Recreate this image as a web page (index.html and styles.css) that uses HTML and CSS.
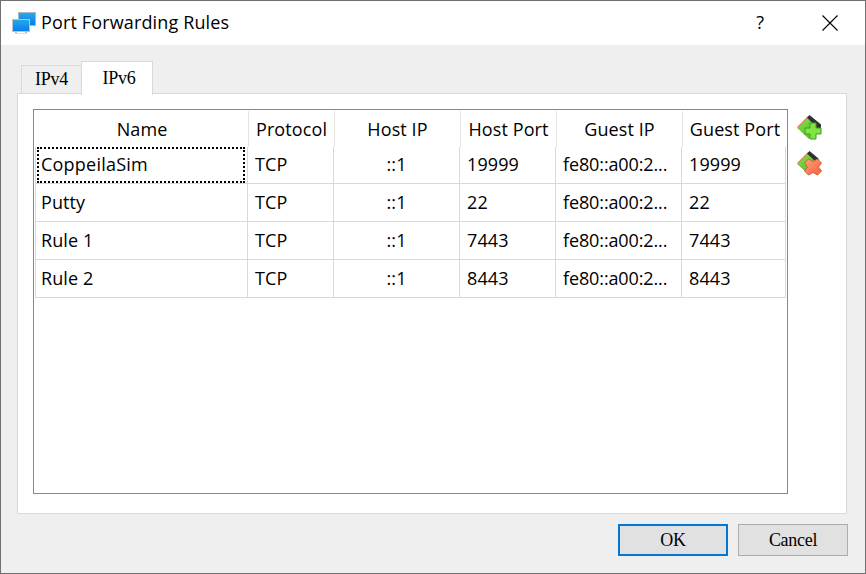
FILE: index.html
```html
<!DOCTYPE html>
<html lang="en">
<head>
<meta charset="utf-8">
<title>Port Forwarding Rules</title>
<link rel="stylesheet" href="styles.css">
</head>
<body>
<div class="window">
  <header class="titlebar">
    <svg class="app-icon" width="24" height="22" viewBox="0 0 24 22">
      <defs><linearGradient id="blue" x1="0" y1="0" x2="0" y2="1"><stop offset="0" stop-color="#25a9e8"/><stop offset="1" stop-color="#087df0"/></linearGradient></defs>
      <path d="M6 0H24V14H6z" fill="#a9b9c4"/><path d="M7 1H23V13H7z" fill="url(#blue)"/>
      <path d="M0 7H18V20H0z" fill="#b9c2ca"/><path d="M1 8H17V19H1z" fill="url(#blue)"/>
      <path d="M3 20H15V21.5H3z" fill="#b9bcc0"/><path d="M5 20H13V21H5z" fill="#fff"/>
    </svg>
    <h1>Port Forwarding Rules</h1>
    <span class="help">?</span>
    <svg class="close" width="16" height="16" viewBox="0 0 16 16"><path d="M.5 .5L15.5 15.5M15.5 .5L.5 15.5" stroke="#000" stroke-width="1.1"/></svg>
  </header>
  <nav class="tabs"><div class="tab">IPv4</div><div class="tab active">IPv6</div></nav>
  <main class="pane">
    <div class="table">
      <div class="head"><span>Name</span><span>Protocol</span><span>Host IP</span><span>Host Port</span><span>Guest IP</span><span>Guest Port</span></div>
      <div class="body">
        <div class="row first"><span class="focus">CoppeilaSim</span><span>TCP</span><span class="center">::1</span><span>19999</span><span class="addr">fe80::a00:2...</span><span>19999</span></div>
        <div class="row"><span>Putty</span><span>TCP</span><span class="center">::1</span><span>22</span><span class="addr">fe80::a00:2...</span><span>22</span></div>
        <div class="row"><span>Rule 1</span><span>TCP</span><span class="center">::1</span><span>7443</span><span class="addr">fe80::a00:2...</span><span>7443</span></div>
        <div class="row"><span>Rule 2</span><span>TCP</span><span class="center">::1</span><span>8443</span><span class="addr">fe80::a00:2...</span><span>8443</span></div>
      </div>
    </div>
    <div class="tools">
      <svg width="26" height="25" viewBox="0 0 26 25">
        <defs><linearGradient id="green" x1="0" y1="0" x2="1" y2="1"><stop offset="0" stop-color="#8be34b"/><stop offset="1" stop-color="#3cb820"/></linearGradient></defs>
        <path d="M.7 13L12 1.8L23.5 12L12 23.5z" fill="url(#green)" stroke="#6bb03c" stroke-width=".8"/>
        <path d="M.5 12.5L11 2" stroke="#e9865d" stroke-width="1.4"/>
        <path d="M10 2.5L12.5 0L24 9.5V13H20z" fill="#303030"/>
        <path d="M13 8H19V13H24V19H19V24H13V19H8V13H13z" fill="#80e442" stroke="#3c9f23"/>
      </svg>
      <svg width="26" height="25" viewBox="0 0 26 25">
        <defs><linearGradient id="red" x1="0" y1="0" x2="1" y2="1"><stop offset="0" stop-color="#ffa47e"/><stop offset="1" stop-color="#f4603c"/></linearGradient></defs>
        <path d="M.7 13L12 1.8L23 12L12 23.5z" fill="url(#green)" stroke="#6bb03c" stroke-width=".8"/>
        <path d="M.5 12.5L11 2" stroke="#e9865d" stroke-width="1.4"/>
        <path d="M10 2.5L12.5 0L22 8L19 11z" fill="#303030"/>
        <path d="M11.5 8L16 10.5L20.5 8L24.5 12L21.5 16L24.5 20L20.5 24L16 21.5L11.5 24L7.5 20L10.5 16L7.5 12z" fill="url(#red)" stroke="#dc5a38" stroke-linejoin="round"/>
      </svg>
    </div>
  </main>
  <footer class="actions"><button class="ok">OK</button><button>Cancel</button></footer>
</div>
</body>
</html>
```
FILE: styles.css
```css
*, *::after { box-sizing: border-box; }
body { margin: 0; font: 18px/24px "Open Sans", "Noto Sans", sans-serif; color: #000; }
.window { width: 866px; height: 574px; background: #efefef; border: 1px solid #707070; display: flex; flex-direction: column; }
.titlebar { height: 44px; background: #fff; display: flex; align-items: center; padding: 0 27px 0 11px; flex: none; }
.app-icon { margin-right: 5px; }
h1 { margin: -2px 0 0; font-size: 18px; font-weight: 400; letter-spacing: .14px; white-space: nowrap; }
.help { margin: -2px 58px 0 auto; font-size: 18px; }
.close { margin-top: -1px; }
.tabs { display: flex; align-items: flex-end; height: 49px; padding-left: 20px; flex: none; font: 18px/24px "Liberation Serif", serif; letter-spacing: -.3px; position: relative; z-index: 1; }
.tab { width: 60px; height: 29px; border: 1px solid #d9d9d9; border-right: 0; text-align: center; line-height: 26px; }
.tab.active { width: 72px; height: 34px; background: #fff; border-right: 1px solid #d9d9d9; border-bottom: 0; margin-bottom: -1px; padding-left: 4px; line-height: 32px; }
.pane { width: 830px; height: 421px; margin: -1px 0 0 16px; border: 1px solid #d9d9d9; background: #fff; padding: 15px; display: flex; flex: none; }
.table { width: 755px; height: 385px; border: 1px solid #828790; flex: none; }
.head { display: grid; grid-template-columns: 213px 86px 126px 96px 126px 104px; height: 36px; margin: 1px 0 0 2px; width: 751px; }
.head span { border-right: 1px solid #e3e3e3; text-align: center; line-height: 36px; white-space: nowrap; letter-spacing: .1px; }
.head span:last-child { border-right: 0; }
.body { margin-left: 1px; width: 751px; border-left: 1px solid #d9d9d9; }
.row { display: grid; grid-template-columns: 212px 86px 126px 96px 126px 104px; height: 38px; border-bottom: 1px solid #d9d9d9; }
.row.first { height: 37px; }
.row span { border-right: 1px solid #d9d9d9; line-height: 37px; padding-left: 7px; white-space: nowrap; letter-spacing: .1px; }
.row.first span { line-height: 35px; }
.row .center { text-align: center; padding-left: 0; }
.row .addr { letter-spacing: -.12px; }
.row span:first-child { padding-left: 5px; }
.row .focus { position: relative; letter-spacing: .22px; }
.focus::after { content: ""; position: absolute; left: 1px; top: 0; width: 208px; height: 36px; border: 2px dotted #000; }
.tools { display: flex; flex-direction: column; gap: 11px; padding: 6px 0 0 9px; }
.tools svg { flex: none; }
.actions { display: flex; justify-content: flex-end; gap: 10px; padding: 10px 17px 0 0; }
button { width: 110px; height: 32px; border: 1px solid #adadad; background: #e1e1e1; padding: 0; font: 18px/24px "Liberation Serif", serif; letter-spacing: -.3px; color: #000; }
button.ok { border: 2px solid #0078d7; }
```
